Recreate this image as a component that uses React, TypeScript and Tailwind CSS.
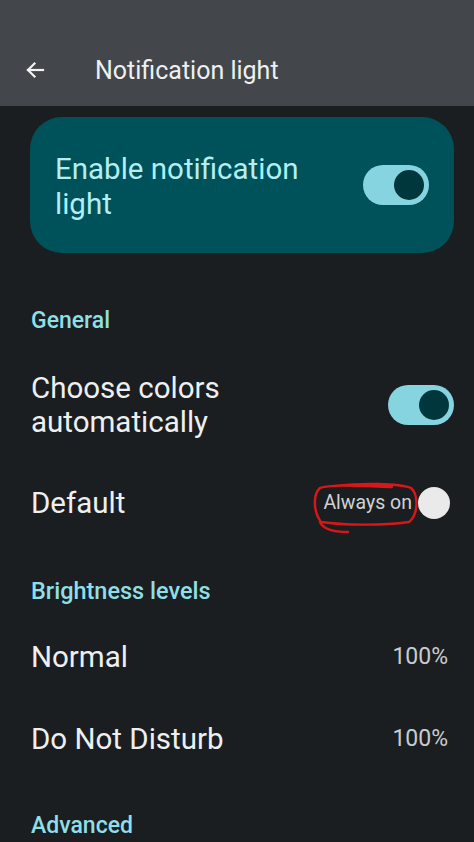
import React from 'react';

function Toggle() {
  return (
    <div className="w-[66px] h-[40px] rounded-full bg-[#86d4df] flex items-center justify-end pr-[5px] shrink-0">
      <div className="w-[30px] h-[30px] rounded-full bg-[#00373d]" />
    </div>
  );
}

export default function App() {
  return (
    <div
      className="relative w-[474px] h-[842px] overflow-hidden bg-[#1b1e21]"
      style={{ fontFamily: 'Roboto, "Noto Sans", sans-serif' }}
    >
      {/* top bar */}
      <div className="h-[106px] bg-[#43474b] flex items-center pt-[34px]">
        <div className="w-[95px] flex items-center pl-[23px]">
          <svg width="24" height="24" viewBox="0 0 24 24" fill="none" stroke="#f2f2f2" strokeWidth="2.2" strokeLinecap="square">
            <path d="M20 12H5" />
            <path d="M11.5 5.5L5 12l6.5 6.5" />
          </svg>
        </div>
        <span className="text-[25px] text-[#eef0f0] leading-none">Notification light</span>
      </div>

      {/* main switch card */}
      <div className="mt-[11px] ml-[30px] mr-[20px] h-[136px] rounded-[32px] bg-[#00525a] flex items-center justify-between pl-[25px] pr-[25px]">
        <div className="text-[29.5px] leading-[35px] text-[#b2eef2] w-[280px] pt-[4px]">
          Enable notification light
        </div>
        <Toggle />
      </div>

      <div className="pl-[31px]">
        <div className="mt-[54px] text-[23px] leading-[28px] font-medium text-[#8fdfe7]">General</div>

        <div className="mt-[36px] flex items-center justify-between pr-[20px]">
          <div className="text-[29.5px] leading-[34px] text-[#eef0f0]">
            Choose colors
            <br />
            automatically
          </div>
          <Toggle />
        </div>

        <div className="mt-[47px] flex items-center justify-between pr-[24px] h-[34px]">
          <div className="text-[29.5px] leading-[34px] text-[#eef0f0]">Default</div>
          <div className="flex items-center gap-[6px]">
            <span className="text-[19.5px] text-[#cfd2d4]">Always on</span>
            <div className="w-[32px] h-[32px] rounded-full bg-[#eaeaea]" />
          </div>
        </div>

        <div className="mt-[57px] text-[23.5px] leading-[28px] font-medium text-[#8fdfe7]">Brightness levels</div>

        <div className="mt-[35px] flex items-center justify-between pr-[26px]">
          <div className="text-[29.5px] leading-[34px] text-[#eef0f0]">Normal</div>
          <span className="text-[23px] text-[#c9cccf]">100%</span>
        </div>

        <div className="mt-[47px] flex items-center justify-between pr-[26px]">
          <div className="text-[29.5px] leading-[34px] text-[#eef0f0]">Do Not Disturb</div>
          <span className="text-[23px] text-[#c9cccf]">100%</span>
        </div>

        <div className="mt-[56px] text-[23px] leading-[28px] font-medium text-[#8fdfe7]">Advanced</div>
      </div>

      {/* hand-drawn annotation */}
      <svg className="absolute left-0 top-0 pointer-events-none" width="474" height="842" viewBox="0 0 474 842" fill="none">
        <path
          d="M334 486 C362 483 398 483 411 488 C419 495 418 515 409 522 C380 526 342 525 321 522 C313 511 313 494 320 488 C330 484 362 486 392 487"
          stroke="#d81818"
          strokeWidth="2.4"
          strokeLinecap="round"
        />
        <path d="M320 522 C323 529 334 532 348 532" stroke="#d81818" strokeWidth="2.4" strokeLinecap="round" />
      </svg>
    </div>
  );
}
